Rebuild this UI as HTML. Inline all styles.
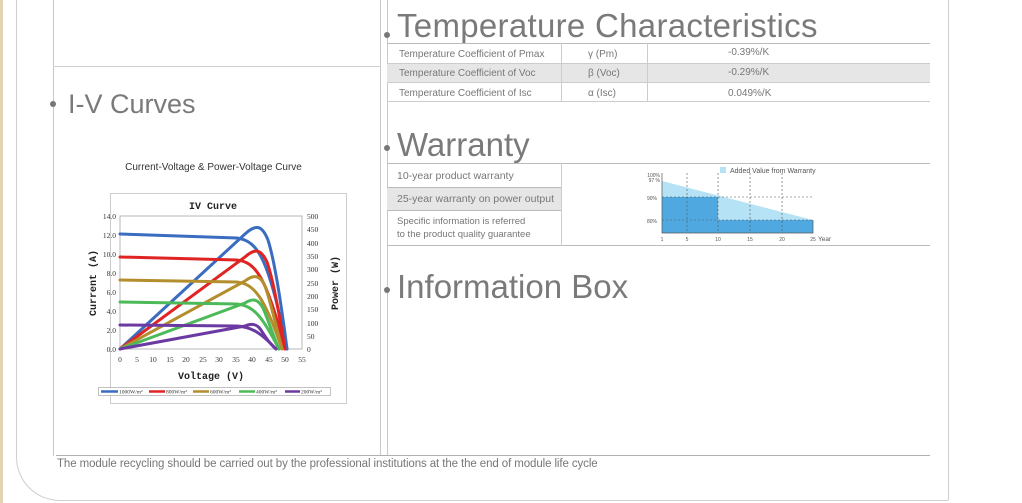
<!DOCTYPE html>
<html><head><meta charset="utf-8"><style>
*{margin:0;padding:0;box-sizing:border-box}
body{width:1022px;height:503px;background:#fff;position:relative;overflow:hidden;font-family:"Liberation Sans",sans-serif;color:#666}
.a{position:absolute}
.t{font-weight:normal;color:#7a7a7a;white-space:nowrap}
.dot{position:absolute;width:6px;height:6px;border-radius:50%;background:#777}
.s{font-size:10px;color:#777;white-space:nowrap}
</style></head><body>
<div class="a" style="left:0;top:0;width:3px;height:503px;background:#e3d3b5"></div>
<div class="a" style="left:16px;top:-50px;width:933px;height:551px;border:1px solid #cfcfcf;border-radius:0 0 2px 44px;border-top:none"></div>
<div class="a" style="left:53px;top:0;width:1px;height:456px;background:#c8c8c8"></div>
<div class="a" style="left:380px;top:0;width:1px;height:456px;background:#c8c8c8"></div>
<div class="a" style="left:387px;top:0;width:1px;height:456px;background:#c8c8c8"></div>
<div class="a" style="left:53px;top:66px;width:328px;height:1px;background:#d0d0d0"></div>
<div class="a" style="left:56px;top:455px;width:874px;height:1px;background:#b0b0b0"></div>

<div class="dot" style="left:50px;top:101px"></div>
<div class="a t" style="left:68px;top:89px;font-size:27px">I-V Curves</div>
<div class="a" style="left:0;top:162px;width:427px;text-align:center;font-size:10px;color:#333">Current-Voltage &amp; Power-Voltage Curve</div>

<svg class="a" style="left:0;top:0" width="1022" height="503">
<rect x="110.5" y="193.5" width="236" height="210" fill="#fff" stroke="#ccc"/>
<text x="213" y="209" font-family="Liberation Mono,monospace" font-weight="bold" font-size="10" fill="#222" text-anchor="middle">IV Curve</text>
<rect x="120" y="216" width="182" height="133" fill="#fff" stroke="#999" stroke-width="0.7"/>
<g font-family="Liberation Serif,serif" font-size="7.5" fill="#333" text-anchor="end">
<text x="116" y="219">14.0</text><text x="116" y="238">12.0</text><text x="116" y="257">10.0</text><text x="116" y="276">8.0</text><text x="116" y="295">6.0</text><text x="116" y="314">4.0</text><text x="116" y="333">2.0</text><text x="116" y="352">0.0</text>
</g>
<g font-family="Liberation Serif,serif" font-size="7.5" fill="#333">
<text x="307" y="219">500</text><text x="307" y="232">450</text><text x="307" y="246">400</text><text x="307" y="259">350</text><text x="307" y="272">300</text><text x="307" y="286">250</text><text x="307" y="299">200</text><text x="307" y="312">150</text><text x="307" y="326">100</text><text x="307" y="339">50</text><text x="307" y="352">0</text>
</g>
<g font-family="Liberation Serif,serif" font-size="7.5" fill="#333" text-anchor="middle">
<text x="120" y="362">0</text><text x="137" y="362">5</text><text x="153" y="362">10</text><text x="170" y="362">15</text><text x="186" y="362">20</text><text x="203" y="362">25</text><text x="219" y="362">30</text><text x="236" y="362">35</text><text x="252" y="362">40</text><text x="269" y="362">45</text><text x="285" y="362">50</text><text x="302" y="362">55</text>
</g>
<text x="211" y="379" font-family="Liberation Mono,monospace" font-weight="bold" font-size="10" fill="#222" text-anchor="middle">Voltage (V)</text>
<text transform="translate(96,283) rotate(-90)" font-family="Liberation Mono,monospace" font-weight="bold" font-size="10" fill="#222" text-anchor="middle">Current (A)</text>
<text transform="translate(338,283) rotate(-90)" font-family="Liberation Mono,monospace" font-weight="bold" font-size="10" fill="#222" text-anchor="middle">Power (W)</text>
<g fill="none" stroke-width="3" stroke-linecap="round">
<path stroke="#3a6cc0" d="M120,234 L237,238 C257,241 268,255 287,349"/>
<path stroke="#3a6cc0" d="M120,349 L245,234 C256,224 262,225 268,240 C275,262 282,310 287,349"/>
<path stroke="#e02424" d="M120,257 L237,260 C255,262 266,275 285,349"/>
<path stroke="#e02424" d="M120,349 L245,257 C255,248 261,249 267,262 C274,282 280,320 285,349"/>
<path stroke="#b48e2c" d="M120,280 L237,282 C254,284 264,296 282,349"/>
<path stroke="#b48e2c" d="M120,349 L245,281 C254,274 260,275 265,286 C271,303 277,330 282,349"/>
<path stroke="#4cba58" d="M120,302 L237,304 C254,306 262,316 279,349"/>
<path stroke="#4cba58" d="M120,349 L245,303 C253,298 258,299 263,308 C269,322 274,338 279,349"/>
<path stroke="#6a3aa2" d="M120,325 L237,326 C252,327 261,333 276,349"/>
<path stroke="#6a3aa2" d="M120,349 L245,326 C252,323 257,324 261,330 C266,338 271,345 276,349"/>
</g>
<rect x="98.5" y="387.5" width="232" height="8" fill="#fff" stroke="#999" stroke-width="0.6"/>
<g stroke-width="2.5"><line x1="101" y1="391.5" x2="118" y2="391.5" stroke="#3a6cc0"/><line x1="149" y1="391.5" x2="165" y2="391.5" stroke="#e02424"/><line x1="193" y1="391.5" x2="209" y2="391.5" stroke="#b48e2c"/><line x1="239" y1="391.5" x2="255" y2="391.5" stroke="#4cba58"/><line x1="285" y1="391.5" x2="300" y2="391.5" stroke="#6a3aa2"/></g>
<g font-family="Liberation Serif,serif" font-size="5.5" fill="#333"><text x="119" y="393.5">1000W/m²</text><text x="166" y="393.5">800W/m²</text><text x="210" y="393.5">600W/m²</text><text x="256" y="393.5">400W/m²</text><text x="301" y="393.5">200W/m²</text></g>

<polygon points="662,181 813,220 813,233 662,233" fill="#b5e2f5"/>
<rect x="662" y="197" width="56" height="36" fill="#4fa9e0"/>
<rect x="718" y="220" width="95" height="13" fill="#4fa9e0"/>
<g stroke="#555" stroke-width="0.6" stroke-dasharray="2,2" fill="none">
<line x1="662" y1="197" x2="813" y2="197"/><line x1="662" y1="220" x2="813" y2="220"/>
<line x1="687" y1="173" x2="687" y2="233"/><line x1="718" y1="173" x2="718" y2="233"/><line x1="750" y1="173" x2="750" y2="233"/><line x1="782" y1="173" x2="782" y2="233"/>
</g>
<polyline points="662,173 662,233 813,233 813,220" fill="none" stroke="#555" stroke-width="0.7"/>
<rect x="720" y="167" width="6" height="6" fill="#b5e2f5"/>
<text x="730" y="173" font-size="7" fill="#555">Added Value from Warranty</text>
<g font-size="5" fill="#555" text-anchor="end"><text x="660" y="177">100%</text><text x="660" y="182">97 %</text><text x="657" y="200">90%</text><text x="657" y="223">80%</text></g>
<g font-size="5" fill="#555" text-anchor="middle"><text x="662" y="241">1</text><text x="687" y="241">5</text><text x="718" y="241">10</text><text x="750" y="241">15</text><text x="782" y="241">20</text><text x="813" y="241">25</text></g>
<text x="818" y="241" font-size="6.5" fill="#555">Year</text>
</svg>

<div class="dot" style="left:384px;top:32px"></div>
<div class="a t" style="left:397px;top:7px;font-size:33px;letter-spacing:0.3px">Temperature Characteristics</div>
<div class="a" style="left:387px;top:43px;width:543px;height:1px;background:#bbb"></div>
<div class="a" style="left:387px;top:63px;width:543px;height:20px;background:#e6e6e6;border-top:1px solid #ccc;border-bottom:1px solid #ccc"></div>
<div class="a" style="left:387px;top:101px;width:543px;height:1px;background:#ccc"></div>
<div class="a" style="left:561px;top:43px;width:1px;height:59px;background:#ccc"></div>
<div class="a" style="left:647px;top:43px;width:1px;height:59px;background:#ccc"></div>
<div class="a s" style="left:399px;top:49px">Temperature Coefficient of Pmax</div>
<div class="a s" style="left:399px;top:68px">Temperature Coefficient of Voc</div>
<div class="a s" style="left:399px;top:88px">Temperature Coefficient of Isc</div>
<div class="a s" style="left:588px;top:49px">γ (Pm)</div>
<div class="a s" style="left:588px;top:68px">β (Voc)</div>
<div class="a s" style="left:588px;top:88px">α (Isc)</div>
<div class="a s" style="left:728px;top:47px">-0.39%/K</div>
<div class="a s" style="left:728px;top:67px">-0.29%/K</div>
<div class="a s" style="left:728px;top:88px">0.049%/K</div>

<div class="dot" style="left:384px;top:145px"></div>
<div class="a t" style="left:397px;top:126px;font-size:33px">Warranty</div>
<div class="a" style="left:387px;top:163px;width:543px;height:1px;background:#bbb"></div>
<div class="a" style="left:387px;top:187px;width:175px;height:24px;background:#e6e6e6;border-top:1px solid #bbb;border-bottom:1px solid #bbb"></div>
<div class="a" style="left:387px;top:245px;width:543px;height:1px;background:#bbb"></div>
<div class="a" style="left:561px;top:163px;width:1px;height:83px;background:#ccc"></div>
<div class="a s" style="left:397px;top:170px;font-size:10.5px">10-year product warranty</div>
<div class="a s" style="left:397px;top:193px;font-size:10.5px">25-year warranty on power output</div>
<div class="a s" style="left:397px;top:215px;font-size:9.5px;line-height:13px">Specific information is referred<br>to the product quality guarantee</div>

<div class="dot" style="left:384px;top:287px"></div>
<div class="a t" style="left:397px;top:268px;font-size:33px">Information Box</div>

<div class="a" style="left:57px;top:458px;font-size:11.5px;color:#777;white-space:nowrap;letter-spacing:-0.1px">The module recycling should be carried out by the professional institutions at the the end of module life cycle</div>
</body></html>
